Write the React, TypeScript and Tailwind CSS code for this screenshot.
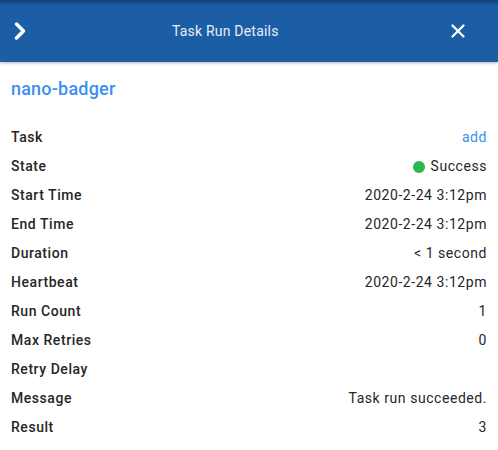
import { ChevronRight, X } from "lucide-react";

const rows: { label: string; value?: string; kind?: "link" | "state" }[] = [
  { label: "Task", value: "add", kind: "link" },
  { label: "State", value: "Success", kind: "state" },
  { label: "Start Time", value: "2020-2-24 3:12pm" },
  { label: "End Time", value: "2020-2-24 3:12pm" },
  { label: "Duration", value: "< 1 second" },
  { label: "Heartbeat", value: "2020-2-24 3:12pm" },
  { label: "Run Count", value: "1" },
  { label: "Max Retries", value: "0" },
  { label: "Retry Delay" },
  { label: "Message", value: "Task run succeeded." },
  { label: "Result", value: "3" },
];

export default function App() {
  return (
    <div
      className="w-[498px] h-[450px] bg-white overflow-hidden"
      style={{ fontFamily: "Roboto, 'Liberation Sans', sans-serif" }}
    >
      {/* header */}
      <div className="relative h-[62px] bg-[#1c5ea6] flex items-center shadow-[0_1px_3px_rgba(0,0,0,0.3)]">
        <div className="absolute top-0 left-0 right-0 h-[5px] bg-gradient-to-b from-[#123f70] to-transparent" />
        <ChevronRight className="ml-[6px] w-[28px] h-[28px] text-white" strokeWidth={3} />
        <div className="ml-[138px] text-[14px] tracking-[0.2px] text-[#e8eef6]">Task Run Details</div>
        <X className="ml-auto mr-[29px] w-[22px] h-[22px] text-white" strokeWidth={2.5} />
      </div>

      <div className="px-[11px]">
        <div className="mt-[15px] h-[24px] leading-[24px] text-[18px] font-medium tracking-[0.2px] text-[#3d8ff0]">
          nano-badger
        </div>

        <div className="mt-[22px]">
          {rows.map((r) => (
            <div
              key={r.label}
              className="h-[29px] flex items-center justify-between text-[14px] tracking-[0.55px]"
            >
              <span className="font-medium text-[#262626]">{r.label}</span>
              {r.kind === "link" ? (
                <span className="text-[#3d8ff0]">{r.value}</span>
              ) : r.kind === "state" ? (
                <span className="flex items-center text-[#262626]">
                  <span className="w-[12px] h-[12px] rounded-full bg-[#2db84d] mr-[6px]" />
                  {r.value}
                </span>
              ) : (
                <span className="text-[#262626]">{r.value}</span>
              )}
            </div>
          ))}
        </div>
      </div>
    </div>
  );
}
